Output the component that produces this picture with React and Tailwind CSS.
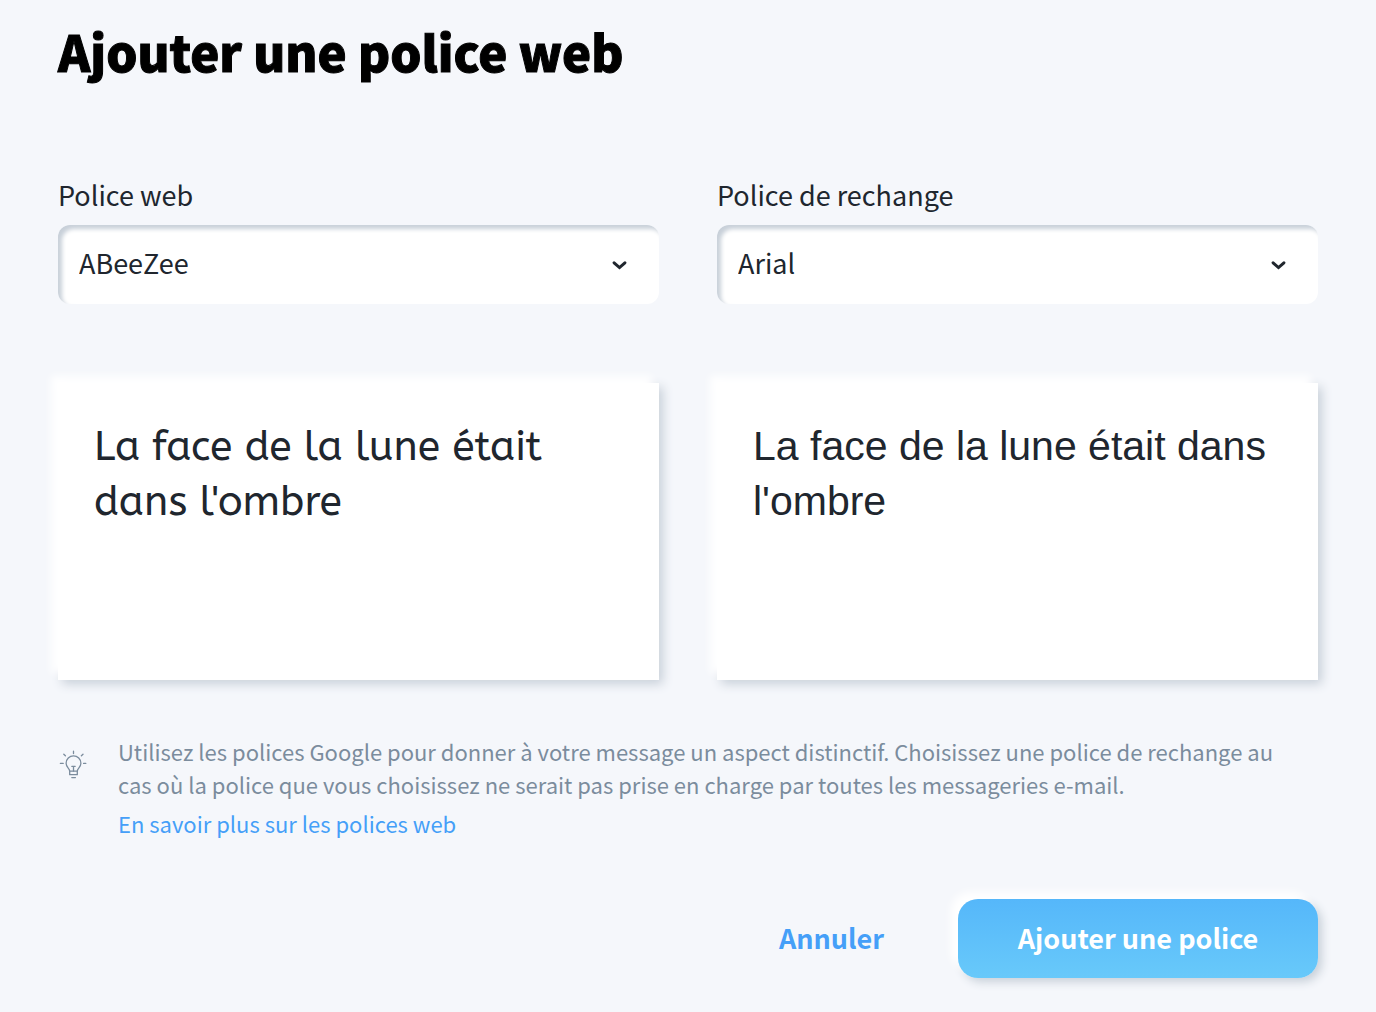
import React, { useState } from 'react';

const WEB_FONTS = ['ABeeZee', 'Lato', 'Open Sans', 'Roboto'];
const FALLBACK_FONTS = ['Arial', 'Courier New', 'Georgia', 'Verdana'];

const SAMPLE_TEXT = "La face de la lune était dans l'ombre";

const ChevronIcon = () => (
  <svg
    className="pointer-events-none absolute top-8 right-[31px] h-4 w-4"
    viewBox="0 0 16 16"
    fill="none"
    stroke="currentColor"
    strokeWidth="3"
    strokeLinecap="round"
    aria-hidden="true"
  >
    <path d="M2.1 5.8 L7.5 10.6 L12.9 5.8" />
  </svg>
);

const BulbIcon = () => (
  <svg
    className="mt-3 h-8 w-8 shrink-0"
    viewBox="0 0 32 32"
    fill="none"
    stroke="currentColor"
    strokeWidth="1.3"
    strokeLinecap="round"
    strokeLinejoin="round"
    aria-hidden="true"
  >
    {/* Rays */}
    <path d="M15.5 4.2v2.4M5.8 7.2l1.6 1.6M25 7.2l-1.6 1.6M2.4 16.4h2.8M25.6 16.4h2.2" />
    {/* Glass and socket */}
    <path d="M11.7 24.2c0-2.6-3.6-3.8-3.6-8a7.4 7.4 0 0 1 14.8 0c0 4.2-3.6 5.4-3.6 8z" />
    <path d="M11.7 24.2v3.5h7.6v-3.5M13.8 30.6h3.6" />
    {/* Filament */}
    <path d="M15.5 19.3v4.7M13.8 19.3h3.4" />
  </svg>
);

const FontSelect = ({ id, label, value, options, onChange }) => (
  <div>
    <label htmlFor={id} className="block text-[27px] leading-9">
      {label}
    </label>
    <div className="relative mt-3">
      <select
        id={id}
        value={value}
        onChange={(e) => onChange(e.target.value)}
        className="block h-[79px] w-full appearance-none rounded-xl bg-white pr-16 pb-0.5 pl-[21px] text-[27px] shadow-[inset_4px_4px_4px_#c8d0d9] focus:outline-none"
      >
        {options.map((font) => (
          <option key={font} value={font}>
            {font}
          </option>
        ))}
      </select>
      <ChevronIcon />
    </div>
  </div>
);

const App = () => {
  const [webFont, setWebFont] = useState('ABeeZee');
  const [fallbackFont, setFallbackFont] = useState('Arial');

  return (
    <main className="min-h-screen bg-[#f5f7fb] px-[58px] pt-4 pb-8 font-['Noto_Sans_CJK_SC',sans-serif] text-[#20262e]">
      <h1 className="text-[49px] leading-[70px] font-black text-black [-webkit-text-stroke:1px_#000000]">
        Ajouter une police web
      </h1>

      <form onSubmit={(e) => e.preventDefault()} className="mt-[91px]">
        {/* Font pickers */}
        <div className="grid grid-cols-2 gap-x-[58px]">
          <FontSelect
            id="web-font"
            label="Police web"
            value={webFont}
            options={WEB_FONTS}
            onChange={setWebFont}
          />
          <FontSelect
            id="fallback-font"
            label="Police de rechange"
            value={fallbackFont}
            options={FALLBACK_FONTS}
            onChange={setFallbackFont}
          />
        </div>

        {/* Previews */}
        <div className="mt-[79px] grid grid-cols-2 gap-x-[58px] text-[41px] leading-[55px]">
          <p className="min-h-[297px] bg-white px-9 py-9 font-['ABeeZee','Noto_Sans',sans-serif] shadow-[-7px_-7px_8px_#ffffff,4px_4px_10px_#c8d0d9]">
            {SAMPLE_TEXT}
          </p>
          <p className="min-h-[297px] bg-white px-9 py-9 font-['Liberation_Sans',sans-serif] shadow-[-7px_-7px_8px_#ffffff,4px_4px_10px_#c8d0d9]">
            {SAMPLE_TEXT}
          </p>
        </div>

        {/* Hint */}
        <div className="mt-[55px] flex gap-7 pr-4 text-[22px] leading-[33px] text-[#7b8c9d]">
          <BulbIcon />
          <div>
            <p>
              Utilisez les polices Google pour donner à votre message un aspect distinctif. Choisissez une police de
              rechange au cas où la police que vous choisissez ne serait pas prise en charge par toutes les messageries
              e-mail.
            </p>
            <a href="#polices-web" className="mt-1.5 inline-block text-[#459ff8]">
              En savoir plus sur les polices web
            </a>
          </div>
        </div>

        {/* Actions */}
        <div className="mt-[59px] flex items-center justify-end gap-[74px] text-[27px] font-bold">
          <button type="button" className="text-[#459ff8]">
            Annuler
          </button>
          <button
            type="submit"
            className="h-[79px] w-[360px] rounded-[20px] bg-linear-to-b from-[#55b7fa] to-[#68c9fa] text-white shadow-[-7px_-7px_8px_#ffffff,4px_4px_10px_#c8d0d9]"
          >
            Ajouter une police
          </button>
        </div>
      </form>
    </main>
  );
};

export default App;
